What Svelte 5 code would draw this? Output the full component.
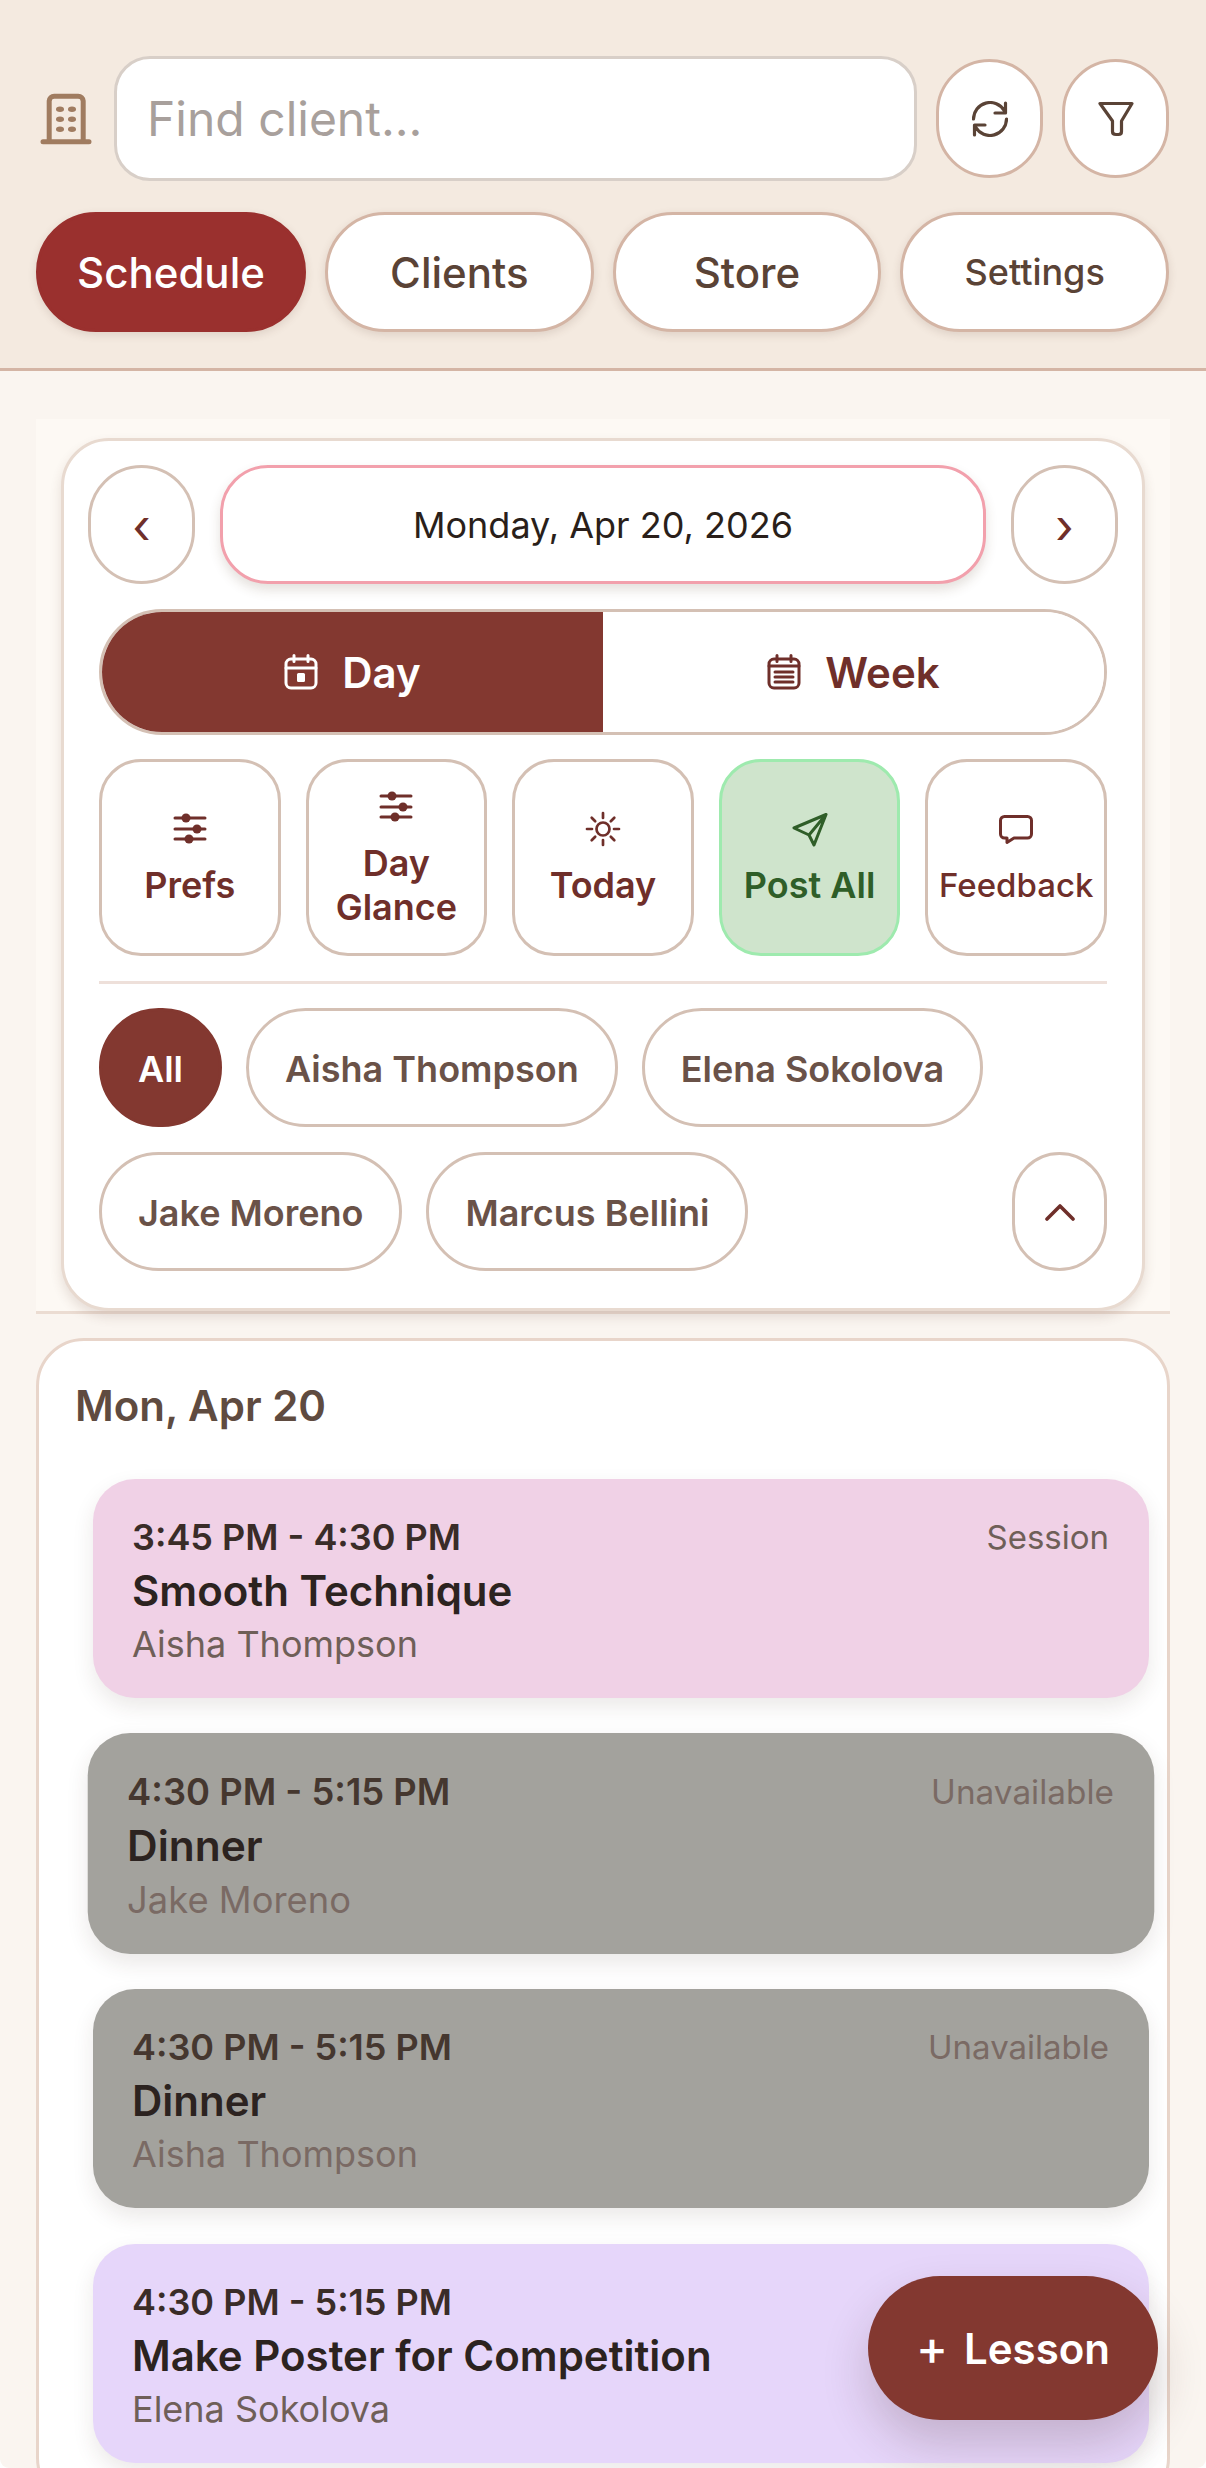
<script>
  const tabs = ['Schedule', 'Clients', 'Store', 'Settings'];
  const firstChips = ['All', 'Aisha Thompson', 'Elena Sokolova'];
  const secondChips = ['Jake Moreno', 'Marcus Bellini'];

  const events = [
    { time: '3:45 PM - 4:30 PM', title: 'Smooth Technique', client: 'Aisha Thompson', kind: 'Session', cls: 'pink' },
    { time: '4:30 PM - 5:15 PM', title: 'Dinner', client: 'Jake Moreno', kind: 'Unavailable', cls: 'grey lifted' },
    { time: '4:30 PM - 5:15 PM', title: 'Dinner', client: 'Aisha Thompson', kind: 'Unavailable', cls: 'grey' },
    { time: '4:30 PM - 5:15 PM', title: 'Make Poster for Competition', client: 'Elena Sokolova', kind: 'Session', cls: 'lilac' }
  ];
</script>

{#snippet sliders()}
  <svg class="ico" viewBox="0 0 36 36" fill="none" stroke="currentColor" stroke-width="3" stroke-linecap="round">
    <path d="M3 7h30M3 18h30M3 28h30" />
    <circle cx="14" cy="7" r="4.5" fill="currentColor" stroke="none" />
    <circle cx="25" cy="18" r="4.5" fill="currentColor" stroke="none" />
    <circle cx="17" cy="28" r="4.5" fill="currentColor" stroke="none" />
  </svg>
{/snippet}

<div class="page">
  <header class="top">
    <div class="search-row">
      <svg class="building" viewBox="0 0 60 60" fill="none" stroke="#a07c60" stroke-width="5" stroke-linecap="round">
        <path d="M13.2 52.8V12a5 5 0 0 1 5-4.7h24a5 5 0 0 1 5 4.7v40.8M7 52.8h46" />
        <g fill="#a07c60" stroke="none">
          <ellipse cx="24" cy="20.2" rx="4" ry="2.7" />
          <ellipse cx="36" cy="20.2" rx="4" ry="2.7" />
          <ellipse cx="24" cy="30.2" rx="4" ry="2.7" />
          <ellipse cx="36" cy="30.2" rx="4" ry="2.7" />
          <ellipse cx="24" cy="40.2" rx="4" ry="2.7" />
          <ellipse cx="36" cy="40.2" rx="4" ry="2.7" />
        </g>
      </svg>
      <input class="find" placeholder="Find client..." />
      <button class="round-btn">
        <svg class="ico" viewBox="0 0 36 36" fill="none" stroke="currentColor" stroke-width="3.2" stroke-linecap="round" stroke-linejoin="round">
          <path d="M1.500 18A16.500 16.500 0 0 1 32.300 9.800M33.500 2v10H23M34.500 18A16.500 16.500 0 0 1 3.700 26.200M2.500 34V24H13" />
        </svg>
      </button>
      <button class="round-btn">
        <svg class="ico" viewBox="0 0 36 36" fill="none" stroke="currentColor" stroke-width="3.2" stroke-linecap="round" stroke-linejoin="round">
          <path d="M2 2.500h32L23.500 20v10.500q0 3-3 3H18q-3.500 0-3.500-3V20z" />
        </svg>
      </button>
    </div>
    <nav class="tabs">
      {#each tabs as tab, i}
        <button class="tab" class:active={i === 0} class:small={tab === 'Settings'}>{tab}</button>
      {/each}
    </nav>
  </header>

  <main class="body">
    <section class="panel">
      <div class="controls">
        <div class="date-row">
          <button class="nav-btn">‹</button>
          <button class="date-btn">Monday, Apr 20, 2026</button>
          <button class="nav-btn">›</button>
        </div>

        <div class="inner">
          <div class="toggle">
            <button class="toggle-half on">
              <svg class="cal" viewBox="0 0 34 36" fill="none" stroke="currentColor" stroke-width="3" stroke-linecap="round" stroke-linejoin="round">
                <rect x="2" y="5" width="30" height="29" rx="5" />
                <path d="M2 14h30M10 1.500v6M24 1.500v6" />
                <rect x="13" y="19" width="8" height="9" rx="1.500" fill="currentColor" stroke="none" />
              </svg>
              Day
            </button>
            <button class="toggle-half">
              <svg class="cal" viewBox="0 0 34 36" fill="none" stroke="currentColor" stroke-width="3" stroke-linecap="round" stroke-linejoin="round">
                <rect x="2" y="5" width="30" height="29" rx="5" />
                <path d="M2 12h30M10 1.500v6M24 1.500v6M8 18h18M8 23h18M8 28h18" />
              </svg>
              Week
            </button>
          </div>

          <div class="actions">
            <button class="action">
              {@render sliders()}
              <span>Prefs</span>
            </button>
            <button class="action">
              {@render sliders()}
              <span>Day<br />Glance</span>
            </button>
            <button class="action">
              <svg class="ico" viewBox="0 0 36 36" fill="none" stroke="currentColor" stroke-width="2.700" stroke-linecap="round">
                <circle cx="18" cy="18" r="6.500" />
                <path d="M18 2v5M18 29v5M2 18h5M29 18h5M6.700 6.700l3.500 3.500M25.800 25.800l3.500 3.500M6.700 29.300l3.500-3.500M25.800 10.200l3.500-3.500" />
              </svg>
              <span>Today</span>
            </button>
            <button class="action post">
              <svg class="ico" viewBox="0 0 36 36" fill="none" stroke="currentColor" stroke-width="3" stroke-linecap="round" stroke-linejoin="round">
                <path d="M34 3.500 2 17l15 7 5 10zM17 24 34 3.500" />
              </svg>
              <span>Post All</span>
            </button>
            <button class="action feedback">
              <svg class="ico" viewBox="0 0 36 36" fill="none" stroke="currentColor" stroke-width="3" stroke-linecap="round" stroke-linejoin="round">
                <path d="M6.500 5.500h23a4 4 0 0 1 4 4V23a4 4 0 0 1-4 4H16l-7 4.500V27H6.500a4 4 0 0 1-4-4V9.500a4 4 0 0 1 4-4z" />
              </svg>
              <span>Feedback</span>
            </button>
          </div>

          <div class="divider"></div>

          <div class="chips">
            {#each firstChips as chip, i}
              <button class="chip" class:selected={i === 0}>{chip}</button>
            {/each}
          </div>
          <div class="chips">
            {#each secondChips as chip}
              <button class="chip">{chip}</button>
            {/each}
            <button class="chip collapse" aria-label="Collapse">
              <svg viewBox="0 0 30 18" width="30" height="18" fill="none" stroke="#6f2f2a" stroke-width="3.600" stroke-linecap="round" stroke-linejoin="round">
                <path d="M2 16 15 3l13 13" />
              </svg>
            </button>
          </div>
        </div>
      </div>
    </section>

    <section class="day-card">
      <h2>Mon, Apr 20</h2>
      <div class="events">
        {#each events as ev}
          <article class="event {ev.cls}">
            <div class="event-head">
              <span class="time">{ev.time}</span>
              <span class="kind">{ev.kind}</span>
            </div>
            <div class="title">{ev.title}</div>
            <div class="client">{ev.client}</div>
          </article>
        {/each}
      </div>
    </section>
  </main>

  <button class="fab"><span class="plus">+</span>Lesson</button>
</div>

<style>
  :global(body) {
    margin: 0;
    background: #fff;
  }

  .page {
    position: relative;
    height: 2468px;
    overflow: hidden;
    background: #faf5f0;
    border-radius: 0 0 9px 9px;
    font-family: Inter, "Liberation Sans", sans-serif;
    color: #5a4336;
  }

  button {
    font-family: inherit;
    cursor: pointer;
    padding: 0;
    box-sizing: border-box;
  }

  .ico {
    width: 36px;
    height: 36px;
    flex: none;
    display: block;
  }

  .top {
    background: #f4eae0;
    border-bottom: 3px solid #d4b5a5;
    padding: 56px 37px 36px 36px;
  }

  .search-row {
    display: flex;
    align-items: center;
  }

  .building {
    width: 60px;
    height: 60px;
    flex: none;
    margin-right: 18px;
  }

  .find {
    flex: 1;
    min-width: 0;
    height: 125px;
    box-sizing: border-box;
    border: 3px solid #d8cfc8;
    border-radius: 36px;
    background: #fff;
    padding: 0 30px;
    font: 400 48px Inter, sans-serif;
    margin-right: 19px;
    color: #5a4336;
  }

  .find::placeholder {
    color: #a8a09c;
    opacity: 1;
  }

  .round-btn {
    width: 107px;
    height: 119px;
    border: 3px solid #d4b5a5;
    border-radius: 54px;
    background: #fff;
    color: #5a4336;
    display: flex;
    align-items: center;
    justify-content: center;
  }

  .round-btn + .round-btn {
    margin-left: 19px;
  }

  .tabs {
    display: grid;
    grid-template-columns: 270px 1fr 1fr 1fr;
    gap: 19px;
    margin-top: 31px;
  }

  .tab {
    height: 120px;
    border: 3px solid #d4b5a5;
    border-radius: 60px;
    background: #fff;
    color: #5a4336;
    font-size: 42px;
    font-weight: 500;
    box-shadow: 0 3px 9px rgba(90, 60, 40, 0.14);
  }

  .tab.small {
    font-size: 36px;
  }

  .tab.active {
    background: #9a302e;
    border-color: #9a302e;
    color: #fff;
  }

  .body {
    padding: 48px 36px 0;
  }

  .panel {
    background: #fdf9f4;
    border-bottom: 3px solid #ebdcd2;
    padding: 19px 25px 0 25px;
  }

  .controls {
    background: #fff;
    border: 3px solid #e8dad0;
    border-radius: 48px;
    padding: 24px 24px 37px;
    box-shadow: 0 6px 12px rgba(90, 60, 40, 0.14);
  }

  .date-row {
    display: flex;
    gap: 25px;
  }

  .nav-btn {
    width: 107px;
    height: 119px;
    flex: none;
    border: 3px solid #d4c0b4;
    border-radius: 54px;
    background: #fff;
    color: #6f2f2a;
    font-size: 48px;
    line-height: 1;
    padding-top: 3px;
  }

  .date-btn {
    flex: 1;
    height: 119px;
    border: 3px solid #f2a0ac;
    border-radius: 48px;
    background: #fff;
    color: #2a1f1a;
    font-size: 36px;
    font-weight: 400;
    box-shadow: 0 6px 12px rgba(90, 60, 40, 0.16);
  }

  .inner {
    margin: 25px 11px 0;
    display: flex;
    flex-direction: column;
    gap: 25px;
  }

  .toggle {
    display: flex;
    height: 126px;
    box-sizing: border-box;
    border: 3px solid #d4c0b4;
    border-radius: 63px;
    overflow: hidden;
    margin-bottom: -1px;
  }

  .toggle-half {
    flex: 1;
    border: 0;
    background: #fff;
    color: #6f2f2a;
    font-size: 42px;
    font-weight: 600;
    display: flex;
    align-items: center;
    justify-content: center;
    gap: 24px;
  }

  .toggle-half.on {
    background: #833830;
    color: #fff;
  }

  .cal {
    width: 34px;
    height: 36px;
    flex: none;
  }

  .actions {
    display: grid;
    grid-template-columns: repeat(5, 1fr);
    gap: 25px;
  }

  .action {
    height: 197px;
    border: 3px solid #d4c0b4;
    border-radius: 42px;
    background: #fff;
    color: #6f2f2a;
    font-size: 36px;
    font-weight: 600;
    line-height: 44px;
    padding-top: 3px;
    display: flex;
    flex-direction: column;
    align-items: center;
    justify-content: center;
    gap: 16px;
  }

  .action.post {
    background: #cfe4cc;
    border-color: #9eeaae;
    color: #2f5e28;
  }

  .action.feedback {
    font-size: 33px;
    font-weight: 500;
  }

  .divider {
    height: 3px;
    background: #eee0da;
  }

  .chips {
    display: flex;
    gap: 24px;
    margin-top: -1px;
  }

  .chips + .chips {
    margin-top: 0;
  }

  .chip {
    height: 119px;
    padding: 2px 36px 0;
    border: 3px solid #d4c0b4;
    border-radius: 60px;
    background: #fff;
    color: #6a5248;
    font-size: 36px;
    font-weight: 600;
  }

  .chip.selected {
    background: #833830;
    border-color: #833830;
    color: #fff;
  }

  .chip.collapse {
    width: 95px;
    padding: 0;
    margin-left: auto;
    display: flex;
    align-items: center;
    justify-content: center;
  }

  .day-card {
    margin-top: 24px;
    background: #fff;
    border: 3px solid #e8d5ca;
    border-radius: 48px;
    padding: 33px 18px 40px 54px;
  }

  h2 {
    margin: 0 0 42px -18px;
    font-size: 42px;
    line-height: 63px;
    font-weight: 600;
    color: #5f4b40;
  }

  .events {
    display: flex;
    flex-direction: column;
    gap: 36px;
  }

  .event {
    height: 219px;
    box-sizing: border-box;
    padding: 36px 40px 0 39px;
    border-radius: 42px;
    color: #2c2320;
    box-shadow: 0 9px 21px rgba(60, 40, 30, 0.1);
  }

  .event.pink {
    background: #f0d1e6;
  }

  .event.grey {
    background: #a3a29d;
  }

  .event.lilac {
    background: #e6d6fa;
  }

  .event.lifted {
    transform: scale(1.01);
  }

  .event-head {
    display: flex;
    justify-content: space-between;
    align-items: center;
  }

  .time {
    font-size: 36px;
    line-height: 44px;
    font-weight: 600;
    color: #3a2c28;
  }

  .kind {
    font-size: 33px;
    color: #6f5f58;
  }

  .title {
    font-size: 42px;
    line-height: 63px;
    font-weight: 600;
  }

  .client {
    font-size: 36px;
    line-height: 44px;
    color: #6f5f58;
  }

  .grey .time {
    color: #45372f;
  }

  .grey .kind,
  .grey .client {
    color: #7a6a64;
  }

  .fab {
    position: absolute;
    left: 868px;
    top: 2276px;
    width: 290px;
    height: 144px;
    border: 0;
    border-radius: 72px;
    background: #833830;
    color: #fff;
    font-size: 42px;
    font-weight: 600;
    display: flex;
    align-items: center;
    justify-content: center;
    gap: 16px;
    box-shadow: 0 24px 48px rgba(60, 30, 30, 0.2);
  }

  .plus {
    font-size: 48px;
    font-weight: 500;
    line-height: 1;
  }
</style>
